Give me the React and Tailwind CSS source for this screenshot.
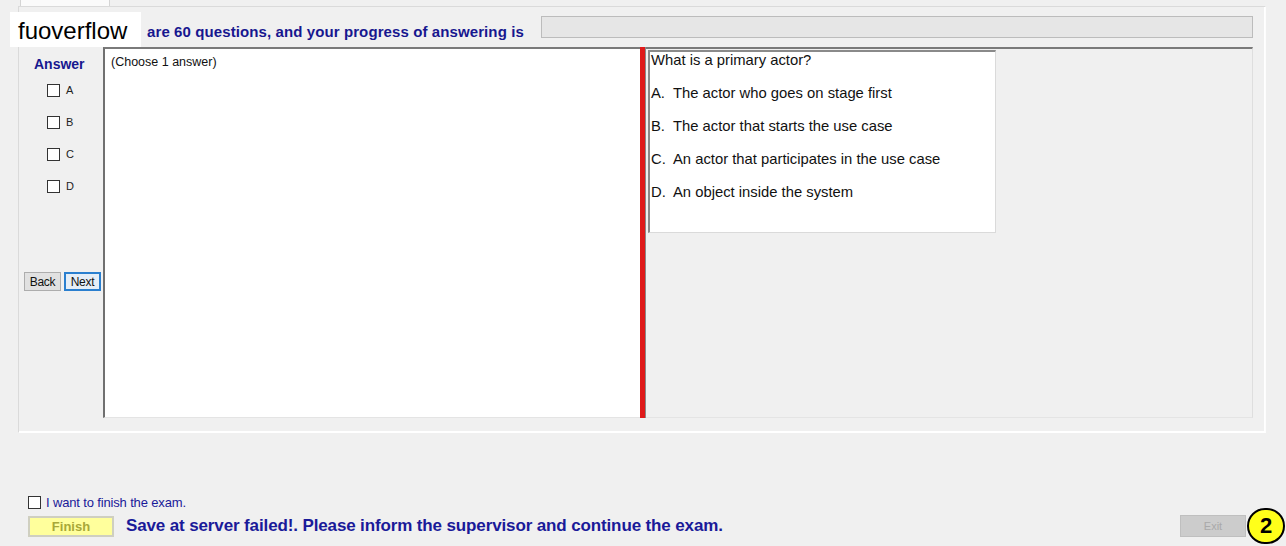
import React from "react";

const blue = "text-[#17178f]";

function Check({ label }) {
  return (
    <div className="flex items-center h-[13px]">
      <div className="w-[13px] h-[13px] border border-[#333] bg-white" />
      <span className="ml-[6px] text-[11px] text-[#222] leading-none">{label}</span>
    </div>
  );
}

const options = [
  ["A.", "The actor who goes on stage first"],
  ["B.", "The actor that starts the use case"],
  ["C.", "An actor that participates in the use case"],
  ["D.", "An object inside the system"],
];

export default function App() {
  return (
    <div
      className="relative w-[1286px] h-[546px] bg-[#f0f0f0] overflow-hidden flex flex-col"
      style={{ fontFamily: '"Liberation Sans", Arial, sans-serif' }}
    >
      {/* tab strip */}
      <div className="h-[6px] flex">
        <div className="ml-[20px] w-[90px] h-[6px] bg-[#fafafa] border-x border-[#d4d4d4]" />
      </div>

      {/* tab page */}
      <div className="ml-[18px] w-[1248px] h-[427px] border border-[#dadada] border-b-white border-r-[#fdfdfd] flex flex-col shadow-[inset_-1px_-1px_0_#ffffff]">
        {/* header */}
        <div className="h-[40px] flex items-center">
          <div className="w-[522px] pl-[128px] pt-[9px] whitespace-nowrap">
            <span className={`text-[15px] font-bold tracking-[0.1px] ${blue}`}>
              are 60 questions, and your progress of answering is
            </span>
          </div>
          <div className="w-[712px] h-[22px] bg-[#e6e6e6] border border-[#bcbcbc]" />
        </div>

        {/* main */}
        <div className="ml-[4px] w-[1230px] h-[371px] flex">
          {/* sidebar */}
          <div className="w-[80px] flex flex-col">
            <div className={`mt-[7px] pl-[11px] text-[14px] font-bold ${blue}`}>Answer</div>
            <div className="mt-[9px] pl-[24px] flex flex-col gap-[19px]">
              <Check label="A" />
              <Check label="B" />
              <Check label="C" />
              <Check label="D" />
            </div>
            <div className="mt-[79px] pl-[1px] flex gap-[3px]">
              <button className="w-[37px] h-[19px] bg-[#e1e1e1] border border-[#adadad] text-[12px] text-[#111] leading-none tracking-[-0.3px]">
                Back
              </button>
              <button className="w-[37px] h-[19px] bg-[#e5eef7] border-2 border-[#2a7fcf] text-[12px] text-[#111] leading-none tracking-[-0.3px]">
                Next
              </button>
            </div>
          </div>

          {/* answer text area */}
          <div className="w-[537px] bg-white border-t-2 border-t-[#7a7a7a] border-l-2 border-l-[#707070] border-b border-b-[#e4e4e4]">
            <div className="pl-[6px] pt-[4px] text-[12.5px] text-[#111]">(Choose 1 answer)</div>
          </div>

          {/* splitter */}
          <div className="w-[6px] flex">
            <div className="w-[5px] bg-[#df1a1a]" />
            <div className="w-[1px] bg-[#8a8a8a]" />
          </div>

          {/* right panel */}
          <div className="w-[607px] border-t-2 border-t-[#7a7a7a] border-r border-r-[#dedede] border-b border-b-[#e4e4e4] pl-[2px] pt-[1px]">
            <div className="w-[348px] h-[183px] bg-white border-t-2 border-t-[#8a8a8a] border-l-2 border-l-[#8a8a8a] border-r border-r-[#dadada] border-b border-b-[#dadada] pl-[1px] text-[14.8px] text-[#111]">
              <div className="leading-[17px]">What is a primary actor?</div>
              <div className="flex flex-col gap-[16px] mt-[16px]">
                {options.map(([k, t]) => (
                  <div key={k} className="flex leading-[17px]">
                    <span className="w-[22px]">{k}</span>
                    <span>{t}</span>
                  </div>
                ))}
              </div>
            </div>
          </div>
        </div>
      </div>

      {/* bottom area */}
      <div className="mt-[63px] ml-[28px] flex items-center h-[13px]">
        <div className="w-[13px] h-[13px] border border-[#333] bg-white" />
        <span className="ml-[5px] text-[13px] tracking-[-0.15px] text-[#1a1a99] leading-none">
          I want to finish the exam.
        </span>
      </div>
      <div className="mt-[5px] flex items-center h-[24px]">
        <button className="ml-[28px] w-[86px] h-[21px] bg-[#ffff9c] border-2 border-[#cfcfc0] text-[13px] font-bold text-[#a8a838] leading-none">
          Finish
        </button>
        <span className="ml-[12px] text-[17px] tracking-[-0.13px] text-[#1a1a99] font-bold whitespace-nowrap">
          Save at server failed!. Please inform the supervisor and continue the exam.
        </span>
        <button className="ml-auto w-[66px] h-[22px] bg-[#cccccc] border border-[#bfbfbf] text-[11px] text-[#a9a9a9] leading-none">
          Exit
        </button>
        <div className="ml-[1px] mr-[1px] w-[38px] h-[36px] rounded-full bg-[#ffff1a] border-2 border-black flex items-center justify-center text-[22px] font-bold text-black leading-none">
          2
        </div>
      </div>

      {/* watermark overlay */}
      <div className="absolute left-[10px] top-[12px] w-[131px] h-[35px] bg-white flex items-center pl-[8px] pt-[3px] text-[24px] text-black">
        fuoverflow
      </div>
    </div>
  );
}
